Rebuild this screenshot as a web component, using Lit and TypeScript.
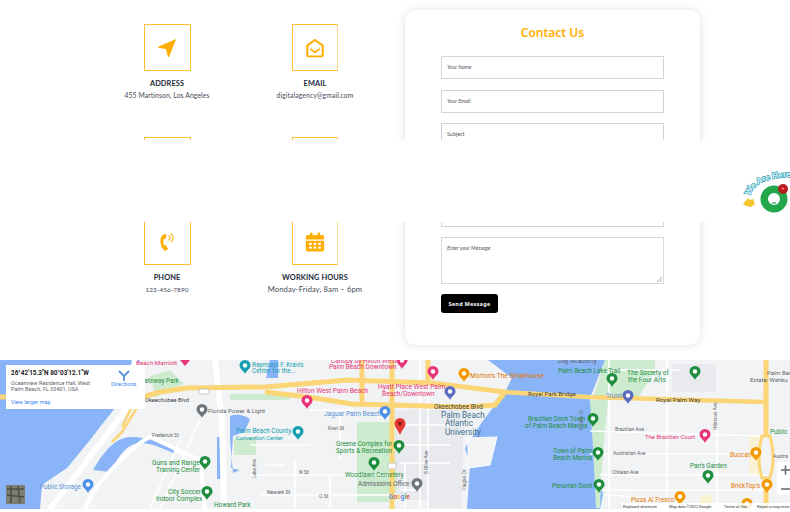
import { LitElement, html, css, svg } from "lit";
import { customElement } from "lit/decorators.js";

type Label = [number, number, string, string, number?];
const BLUE = "#5b8fd8", GREEN = "#1e8e3e", PINK = "#e8357a", ORANGE = "#e37400", GRAY = "#5f6368", TEAL = "#129eaf", DARK = "#3c4043";

const labels: Label[] = [
  [136, 365, "Beach Marriott", PINK, 5.9],
  [140, 383, "Gateway Park", GREEN, 6],
  [252, 367, "Raymond F. Kravis", TEAL, 6],
  [252, 373, "Center for the...", TEAL, 6],
  [145, 402, "Okeechobee Blvd", DARK, 5.4],
  [208, 413, "Florida Power & Light", GRAY, 5.7],
  [152, 437, "Frederick St", GRAY, 4.8],
  [152, 465, "Guns and Range", GREEN, 6.2],
  [156, 472, "Training Center", GREEN, 6.2],
  [168, 494, "City Soccer", GREEN, 6.2],
  [156, 501, "Indoor Complex", GREEN, 6.2],
  [40, 489, "Public Storage", BLUE, 6],
  [214, 507, "Howard Park", GREEN, 6],
  [236, 433, "Palm Beach County", TEAL, 6],
  [236, 440, "Convention Center", TEAL, 5.4],
  [331, 363, "Canopy by Hilton West", PINK, 6.2],
  [329, 369, "Palm Beach Downtown", PINK, 6.2],
  [297, 393, "Hilton West Palm Beach", PINK, 6.3],
  [378, 389, "Hyatt Place West Palm", PINK, 6.3],
  [382, 396, "Beach/Downtown", PINK, 6.3],
  [470, 378, "Morton's The Steakhouse", ORANGE, 6.2],
  [324, 416, "Jaguar Palm Beach", BLUE, 6.2],
  [434, 409, "Okeechobee Blvd", DARK, 6],
  [441, 418, "Palm Beach", "#3f6d8e", 7.8],
  [445, 426, "Atlantic", "#3f6d8e", 7.8],
  [445, 435, "University", "#3f6d8e", 7.8],
  [328, 430, "Kiwi St", GRAY, 5],
  [336, 446, "Greene Complex for", GREEN, 6],
  [336, 453, "Sports & Recreation", GREEN, 6],
  [345, 477, "Woodlawn Cemetery", GREEN, 6],
  [358, 486, "Admissions Office", GRAY, 6],
  [299, 474, "N St", GRAY, 4.8],
  [267, 494, "Newark St", GRAY, 4.8],
  [319, 498, "O St", GRAY, 4.8],
  [558, 363, "Day Academy", GRAY, 6],
  [558, 373, "Palm Beach Lake Trail", GREEN, 6],
  [627, 375, "The Society of", GREEN, 6.2],
  [628, 382, "the Four Arts", GREEN, 6.2],
  [767, 375, "Palm Beach", GRAY, 5.6],
  [750, 382, "Estate: Wahku", GRAY, 5.6],
  [528, 396, "Royal Park Bridge", DARK, 5.8],
  [656, 402, "Royal Palm Way", DARK, 5.9],
  [606, 398, "Truist", BLUE, 6],
  [528, 421, "Brazilian Dock Town", GREEN, 6],
  [525, 428, "of Palm Beach Marina", GREEN, 6],
  [553, 453, "Town of Palm", GREEN, 6],
  [553, 460, "Beach Marina", GREEN, 6],
  [552, 488, "Peruvian Dock", GREEN, 6],
  [615, 431, "Brazilian Ave", GRAY, 4.8],
  [645, 439, "The Brazilian Court", PINK, 5.6],
  [613, 455, "Australian Ave", GRAY, 4.8],
  [612, 474, "Chilean Ave", GRAY, 4.8],
  [690, 468, "Pan's Garden", GREEN, 6],
  [730, 457, "Buccan", ORANGE, 6],
  [731, 488, "BrickTop's", ORANGE, 6],
  [631, 502, "Pizza Al Fresco", ORANGE, 6],
  [770, 434, "Public", GREEN, 6],
  [773, 458, "Austra", GRAY, 4.8],
];

const vlabels: [number, number, string][] = [
  [428, 474, "S Olive Ave"], [466, 490, "Flagler Dr"], [583, 430, "S Lake Dr"], [717, 430, "Hibiscus Ave"], [256, 478, "Lake Ave"],
];

const pins: [number, number, string][] = [
  [202, 410, "#70757a"], [205, 462, GREEN], [207, 492, GREEN], [88, 485, "#4e8fe8"], [245, 366, TEAL], [298, 432, TEAL],
  [307, 401, "#e8357a"], [402, 361, "#e8357a"], [433, 372, "#e8357a"], [464, 374, "#f29900"], [450, 392, "#5c6bc0"],
  [385, 412, "#4e8fe8"], [399, 446, GREEN], [374, 463, GREEN], [417, 484, "#70757a"], [695, 372, GREEN], [612, 379, GREEN],
  [628, 396, "#5c6bc0"], [593, 419, GREEN], [598, 453, GREEN], [599, 485, GREEN], [705, 435, "#e8357a"], [756, 453, "#f29900"],
  [767, 485, "#f29900"], [708, 476, GREEN], [680, 497, "#f29900"], [747, 504, "#f29900"],
];

function pin(x: number, y: number, c: string) {
  return svg`<path fill=${c} d="M${x} ${y + 8}c-1.200-3.500-5.500-5-5.500-8.500a5.500 5.500 0 0 1 11 0c0 3.500-4.300 5-5.500 8.500z"/><circle cx=${x} cy=${y - 0.5} r="2.200" fill="#fff"/>`;
}

@customElement("app-root")
export class AppRoot extends LitElement {
  static styles = css`
    :host { display: block; position: relative; width: 790px; height: 512px; overflow: hidden; background: #fff; font-family: "Lato", "Open Sans", sans-serif; color: #333; }
    .contact { display: flex; height: 360px; align-items: flex-start; }
    .info { width: 405px; padding: 24px 0 0 93px; box-sizing: border-box; display: grid; grid-template-columns: 148px 148px; justify-content: start; }
    .cell { display: flex; flex-direction: column; align-items: center; height: 113px; width: 148px; }
    .cell.hidden { height: 81px; }
    .box { width: 47px; height: 47px; box-sizing: border-box; border: 1px solid #ffbe33; display: flex; align-items: center; justify-content: center; flex: none; }
    .box.narrow { width: 46px; border-right-color: #ffd98a; }
    .box svg { width: 20px; height: 20px; fill: #ffae00; display: block; }
    .name { margin-top: 8px; font-size: 7.4px; line-height: 9px; font-weight: 700; color: #222a3a; letter-spacing: 0.1px; white-space: nowrap; }
    .val { margin-top: 2px; font-size: 6.8px; line-height: 11px; color: #444b5a; letter-spacing: 0.1px; white-space: nowrap; }
    .val.wide { font-size: 7.6px; letter-spacing: 0.12px; }
    .val.num { font-size: 6.4px; }
    .card { margin: 10px 0 0 0; width: 295px; height: 335px; box-sizing: border-box; background: #fff; border-radius: 10px; box-shadow: 0 0 8px rgba(0,0,0,.13); padding: 13px 36px 0; display: flex; flex-direction: column; }
    h2 { margin: 0 0 14px; font-family: "Noto Sans", "Open Sans", sans-serif; font-size: 12px; line-height: 19px; font-weight: 600; color: #ffae00; text-align: center; }
    .field { height: 23px; box-sizing: border-box; flex: none; border: 1px solid #d4d4d4; padding: 0 5px; font-size: 5.4px; line-height: 20px; font-style: italic; color: #555; margin-bottom: 10.5px; }
    .field.upright { font-style: normal; }
    .field.gap { margin-bottom: 57.5px; }
    .area { height: 47px; box-sizing: border-box; flex: none; border: 1px solid #d8d8d8; padding: 6px 5px; font-size: 5.4px; line-height: 8px; font-style: italic; color: #555; position: relative; margin-bottom: 10px; }
    .grip { position: absolute; right: 1px; bottom: 1px; width: 5px; height: 5px; display: block; }
    .send { width: 57px; height: 19px; box-sizing: border-box; background: #000; color: #fff; border: 0; border-radius: 3px; font-family: "Noto Sans", sans-serif; font-weight: 700; font-size: 5.6px; letter-spacing: .2px; padding: 0; }
    .band { position: absolute; left: 0; top: 140px; width: 790px; height: 82px; background: #fff; z-index: 1; }
    .chat { position: absolute; left: 738px; top: 165px; width: 52px; height: 52px; z-index: 2; display: block; }
    .chat text { font: 900 8px "Lato", sans-serif; fill: #e4f8fb; stroke: #1f9db3; stroke-width: 1.4px; paint-order: stroke; letter-spacing: .2px; }
    .map { display: block; width: 790px; height: 149px; }
    .map text { font-family: "Roboto", sans-serif; }
  `;
  render() {
    return html`
      <div class="contact">
        <div class="info">
          <div class="cell"><div class="box"><svg viewBox="0 0 24 24"><path d="M23 1.200 2 10.200c-.9.400-.7 1.700.3 1.800l8.500 1.100 2 8.800c.2 1 1.500 1.100 1.900.2z"/></svg></div><div class="name">ADDRESS</div><div class="val">455 Martinson, Los Angeles</div></div>
          <div class="cell"><div class="box narrow"><svg viewBox="0 0 24 24"><path fill-rule="evenodd" d="M12 1 1.500 8.500V21a2 2 0 0 0 2 2h17a2 2 0 0 0 2-2V8.500zm0 2.800 8 5.800V21H4V9.600zM6.800 12.300l-1.300 1.500L12 18.500l6.500-4.700-1.300-1.500L12 16z"/></svg></div><div class="name">EMAIL</div><div class="val">digitalagency@gmail.com</div></div>
          <div class="cell hidden"><div class="box"></div></div>
          <div class="cell hidden"><div class="box narrow"></div></div>
          <div class="cell"><div class="box"><svg viewBox="0 0 24 24"><path d="M9.500 2.500 5.800 4.500C3.500 8 3.500 15 7 20c1 1.500 2 2.500 3.500 2.500l2.800-2.500-3-4.500-2 .8c-1.100-2.800-1.100-5.800-.2-8l2.100.3 1.300-5zM14 3.500l-.4 1.300c2 1 2 3.500 0 4.500l.4 1.300c3-1.400 3-5.700 0-7.100zm2.500-2-.5 1.200c3.500 1.800 3.500 7 0 8.800l.5 1.200c4.500-2.200 4.500-9 0-11.200z"/></svg></div><div class="name">PHONE</div><div class="val num">123-456-7890</div></div>
          <div class="cell"><div class="box narrow"><svg viewBox="0 0 24 24"><path fill-rule="evenodd" d="M6 1h3v2.500h6V1h3v2.500h2.500A2.500 2.500 0 0 1 23 6v3H1V6a2.500 2.500 0 0 1 2.500-2.500H6zM1 10.500h22V21a2.500 2.500 0 0 1-2.500 2.500h-17A2.500 2.500 0 0 1 1 21zM5 13v2.500h3V13zm5.500 0v2.500h3V13zm5.500 0v2.500h3V13zM5 17.500V20h3v-2.500zm5.500 0V20h3v-2.500zm5.500 0V20h3v-2.500z"/></svg></div><div class="name">WORKING HOURS</div><div class="val wide">Monday-Friday, 8am – 6pm</div></div>
        </div>
        <div class="card">
          <h2>Contact Us</h2>
          <div class="field">Your Name</div>
          <div class="field">Your Email</div>
          <div class="field upright gap">Subject</div>
          <div class="field">Your Phone</div>
          <div class="area">Enter your Message
            <svg class="grip" viewBox="0 0 5 5"><path d="M0 5 5 0M2.500 5 5 2.500" stroke="#777" stroke-width=".6"/></svg>
          </div>
          <button class="send">Send Message</button>
        </div>
      </div>
      <div class="band"></div>
      <svg class="chat" viewBox="738 165 52 52">
        <defs><path id="arc" d="M750 196C753 184 766 177 792 177"/></defs>
        <text><textPath href="#arc">We Are Here!</textPath></text>
        <path fill="#f7c52d" d="M743 204l5-6 2 2 3-1 2 5-4 3-5-1z"/>
        <circle cx="774" cy="199" r="9.750" fill="#fff" stroke="#22a84a" stroke-width="7.500"/>
        <path d="M772 203h4" stroke="#22a84a" stroke-width="1.200"/>
        <circle cx="783" cy="189" r="5" fill="#b71c1c"/>
        <circle cx="783" cy="188.500" r="1.200" fill="#f66"/>
      </svg>
      <svg class="map" viewBox="0 360 790 149">
        <rect x="0" y="360" width="790" height="149" fill="#f1f3f4"/>
        <path fill="#e8eaed" d="M672 364h44v28h-44zM428 410h38l-3 30-2 68h-33zM395 410h33v90h-33z"/>
        <g fill="#8ab4f8">
          <path d="M0 360H140L115 408 100 427 90 440 67 468 42 485 40 509H0z"/>
          <path d="M93 470C105 450 115 438 130 437 150 437 165 442 177 450L173 453C160 447 150 443 140 443 125 444 118 458 110 472z"/>
          <path d="M488 360 512 378 505 392 482 422 465 448 470 465 467 509H600L603 495 597 455 590 398 605 360z"/>
          <path d="M217 437h4v42h-4z"/>
          <path d="M230 416C238 413 248 416 250 420L244 432 233 436 231 468 240 470 233 473 230 440z"/>
          <path d="M270 360h8v18h-12z"/>
        </g>
        <path fill="#f1f3f4" stroke="#fff" d="M468 438 497 437 490 465 468 468z"/>
        <g fill="#cdeccf">
          <path d="M150 376l20-6 14 14-18 6-10 8z"/>
          <path d="M357 422h36l4 68-8 12h-32z"/>
          <path d="M234 438h22v17h-22z"/>
          <path d="M605 360h50v10l-18 30h-30l-14-2z"/>
          <path d="M590 400h18l-3 30-4 50-1 28h-4l-3-60z"/>
          <path d="M230 394h60v6h-60z"/>
        </g>
        <path fill="#fbf1d3" d="M749 435h12v40h-12zM700 495h12v13h-12z"/>
        <g fill="none" stroke="#fff" stroke-width="4">
          <path stroke-width="6" d="M50 509 127 408 135 360"/>
          <path stroke-width="6" d="M215 360 222 420 224 509"/>
          <path d="M85 509C95 480 140 440 150 437L200 460 205 509"/>
        </g>
        <g fill="none" stroke="#fff" stroke-width="1.600">
          <path d="M152 435l45 30M200 420 160 509M180 440 150 509"/>
          <path d="M420 360V509M428 383V509M400 425h70M400 445h50M400 463h50M405 463v45M400 490h20"/>
          <path d="M250 445h60M250 475h145M260 495h130M295 460v48M340 410v50M310 410h45M265 465h20M330 475v33"/>
          <path d="M609 360V509M667 360V509M717 402V509M590 431l176 5M590 454h176M600 475h166M600 490h166M610 370h70M640 378h30"/>
          <path d="M605 495c20 0 40 5 60 5"/>
        </g>
        <g fill="none" stroke="#fcd577" stroke-width="5">
          <path d="M0 397H143L160 392 187 388 265 387 348 380 432 383 505 392"/>
          <path d="M265 392 308 397 352 404 465 407 495 405 505 392"/>
          <path stroke-width="4.500" d="M505 392 588 397 765 402"/>
          <path d="M362 360V404M392 360V509M428 360V383"/>
          <path d="M766 360V435M766 478V509"/>
          <path stroke-width="2.500" d="M143 398 122 432 112 442M135 400 122 427"/>
          <path stroke-width="3" d="M762 436C758 450 758 465 762 478H770C774 465 774 450 770 436z"/>
        </g>
        ${labels.map(([x, y, t, c, s]) => svg`<text x=${x} y=${y} fill=${c} font-size=${(s ?? 6) * 1.06}>${t}</text>`)}
        ${vlabels.map(([x, y, t]) => svg`<text transform="translate(${x} ${y}) rotate(-90)" font-size="4.8" fill="#5f6368">${t}</text>`)}
        ${pins.map(([x, y, c]) => pin(x, y, c))}
        <path d="M180 360h10l-5 6z" fill="#e8357a"/>
        <rect x="199" y="389" width="10" height="5" rx="1" fill="#fff" stroke="#999" stroke-width=".5"/>
        <rect x="388" y="463" width="8" height="6" rx="1" fill="#fff" stroke="#999" stroke-width=".5"/>
        <path fill="#e53935" d="M400 435c-2-5-5.500-8-5.500-11.500a5.500 5.500 0 0 1 11 0c0 3.500-3.500 6.500-5.500 11.500z"/>
        <circle cx="400" cy="423.500" r="2" fill="#8c1c13"/>
        <text x="389" y="499" font-size="6.5" font-weight="500" fill="#4285f4">G<tspan fill="#ea4335">o</tspan><tspan fill="#fbbc04">o</tspan><tspan fill="#4285f4">g</tspan><tspan fill="#34a853">l</tspan><tspan fill="#ea4335">e</tspan></text>
        <rect x="6" y="485" width="19" height="19" rx="1" fill="#7d7d74"/>
        <path d="M7 489h17M7 495l17 2M11 486v17M18 486l2 17" stroke="#4e4e48" stroke-width="1.500"/>
        <rect x="6" y="365" width="139" height="44" fill="#fff"/>
        <text x="11" y="375" font-size="6.4" font-weight="700" fill="#222">26°42'15.3"N 80°03'12.1"W</text>
        <text x="11" y="385" font-size="5.5" fill="#5f6368">Oceanview Residence Hall, West</text>
        <text x="11" y="391" font-size="5.5" fill="#5f6368">Palm Beach, FL 33401, USA</text>
        <text x="11" y="404" font-size="5.5" fill="#4285f4">View larger map</text>
        <text x="111" y="386" font-size="5.7" fill="#4285f4">Directions</text>
        <path d="M119 371l5 5v5M129 371l-5 5" stroke="#5b8fd8" stroke-width="1.800" fill="none"/>
        <rect x="777" y="462" width="13" height="33" fill="#fff"/>
        <path d="M781 470h9M785.500 465.500v9M781 489h9" stroke="#666" stroke-width="1.500"/>
        <rect x="622" y="503" width="168" height="6" fill="#fff" opacity=".85"/>
        <text x="623" y="507.500" font-size="3.9" fill="#333">Keyboard shortcuts</text>
        <text x="669" y="507.500" font-size="3.9" fill="#333">Map data ©2022 Google</text>
        <text x="724" y="507.500" font-size="3.9" fill="#333">Terms of Use</text>
        <text x="757" y="507.500" font-size="3.9" fill="#333">Report a map error</text>
      </svg>
    `;
  }
}
